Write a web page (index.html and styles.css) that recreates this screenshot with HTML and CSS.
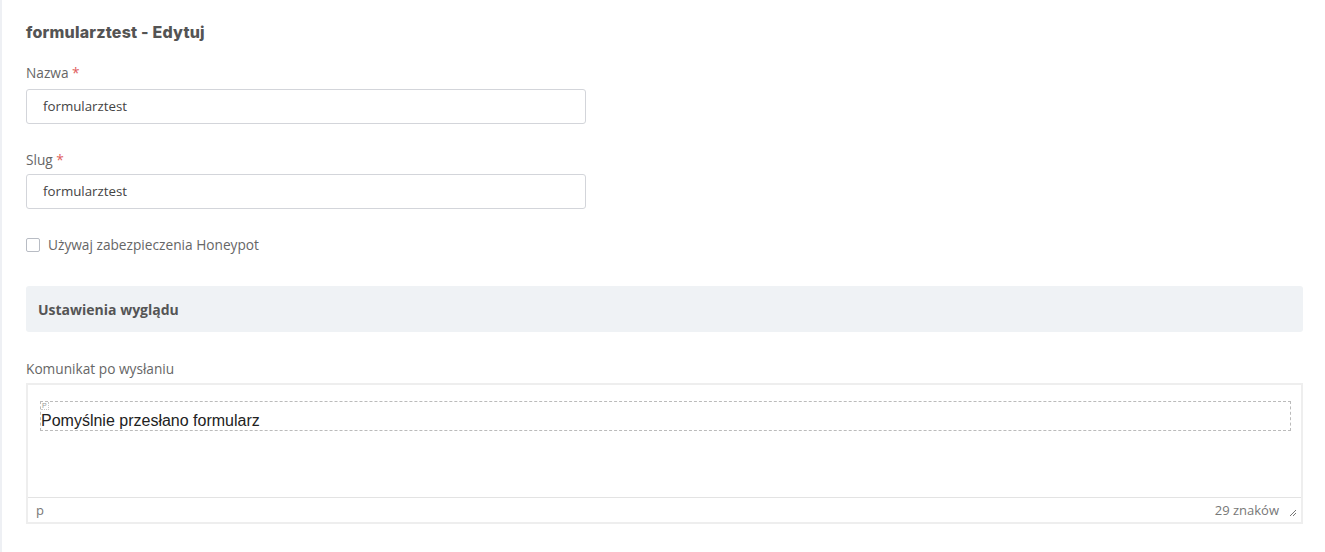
FILE: index.html
```html
<!DOCTYPE html>
<html lang="pl">
<head>
<meta charset="utf-8">
<title>formularztest - Edytuj</title>
<link rel="stylesheet" href="styles.css">
</head>
<body>
<div class="page">
  <h1 class="title">formularztest - Edytuj</h1>

  <div class="field">
    <label class="label">Nazwa <span class="req">*</span></label>
    <div class="input">formularztest</div>
  </div>

  <div class="field field-2">
    <label class="label">Slug <span class="req">*</span></label>
    <div class="input">formularztest</div>
  </div>

  <label class="check">
    <span class="box"></span>
    <span>Używaj zabezpieczenia Honeypot</span>
  </label>

  <div class="section">Ustawienia wyglądu</div>

  <div class="field field-3">
    <label class="label">Komunikat po wysłaniu</label>
    <div class="editor">
      <div class="editor-body">
        <div class="block"><span class="block-tag">P</span>Pomyślnie przesłano formularz</div>
      </div>
      <div class="statusbar">
        <span class="path">p</span>
        <span class="count">29 znaków</span>
        <svg class="grip" width="10" height="10" viewBox="0 0 10 10"><path d="M9 3 L3 9 M9 6 L6 9" stroke="#777" stroke-width="1" fill="none"/></svg>
      </div>
    </div>
  </div>
</div>
</body>
</html>
```

FILE: styles.css
```css
html, body {
  margin: 0;
  padding: 0;
  background: #ffffff;
}
body {
  border-left: 2px solid #eef0f4;
  min-height: 552px;
  box-sizing: border-box;
  font-family: "Open Sans", "Noto Sans", sans-serif;
  color: #555;
}
.page {
  padding: 22px 22px 0 24px;
}
.title {
  margin: 0;
  font-family: "Inter", "Open Sans", sans-serif;
  font-weight: 800;
  font-size: 16px;
  line-height: 20px;
  color: #545454;
  letter-spacing: 0.2px;
}
.field {
  margin-top: 22px;
  display: flex;
  flex-direction: column;
}
.field-2 { margin-top: 25px; }
.field-3 { margin-top: 28px; }
.label {
  font-size: 13.7px;
  line-height: 18px;
  color: #666;
  margin-bottom: 7px;
}
.field-2 .label { margin-bottom: 5px; padding-top: 2px; }
.field-3 .label { margin-bottom: 5px; }
.req { color: #e05d5d; }
.input {
  width: 560px;
  height: 35px;
  box-sizing: border-box;
  border: 1px solid #d3d5da;
  border-radius: 3px;
  padding: 0 16px;
  font-size: 13.3px;
  line-height: 33px;
  color: #444;
}
.check {
  display: flex;
  align-items: center;
  gap: 8px;
  margin-top: 27px;
  font-size: 13.7px;
  line-height: 18px;
  color: #666;
}
.box {
  width: 14px;
  height: 14px;
  box-sizing: border-box;
  border: 1px solid #b8bcc4;
  border-radius: 2px;
  background: #fff;
}
.section {
  margin-top: 32px;
  height: 46px;
  background: #eff2f5;
  border-radius: 3px;
  padding: 0 12px;
  display: flex;
  align-items: center;
  font-weight: 700;
  font-size: 14px;
  color: #555;
}
.editor {
  border: 2px solid #eeeeee;
  box-sizing: border-box;
  height: 141px;
  display: flex;
  flex-direction: column;
}
.editor-body {
  flex: 1;
  padding: 16px 10px 0 12px;
  border-bottom: 1px solid #e3e3e3;
}
.block {
  position: relative;
  border: 1px dashed #bbbbbb;
  height: 30px;
  box-sizing: border-box;
  padding: 9px 0 0 0;
  font-family: "Liberation Sans", Arial, sans-serif;
  font-size: 16px;
  line-height: 19px;
  color: #222;
}
.block-tag {
  position: absolute;
  left: 0;
  top: 0;
  padding: 0 1px;
  border: 1px dotted #c8c8c8;
  border-top: 0;
  border-left: 0;
  font-size: 7px;
  line-height: 7px;
  color: #999;
}
.statusbar {
  height: 24px;
  display: flex;
  align-items: center;
  padding: 0 4px 0 8px;
  font-size: 13px;
  color: #777;
}
.path { flex: 1; }
.count { margin-right: 8px; }
.grip { display: block; margin-top: 4px; }
```
